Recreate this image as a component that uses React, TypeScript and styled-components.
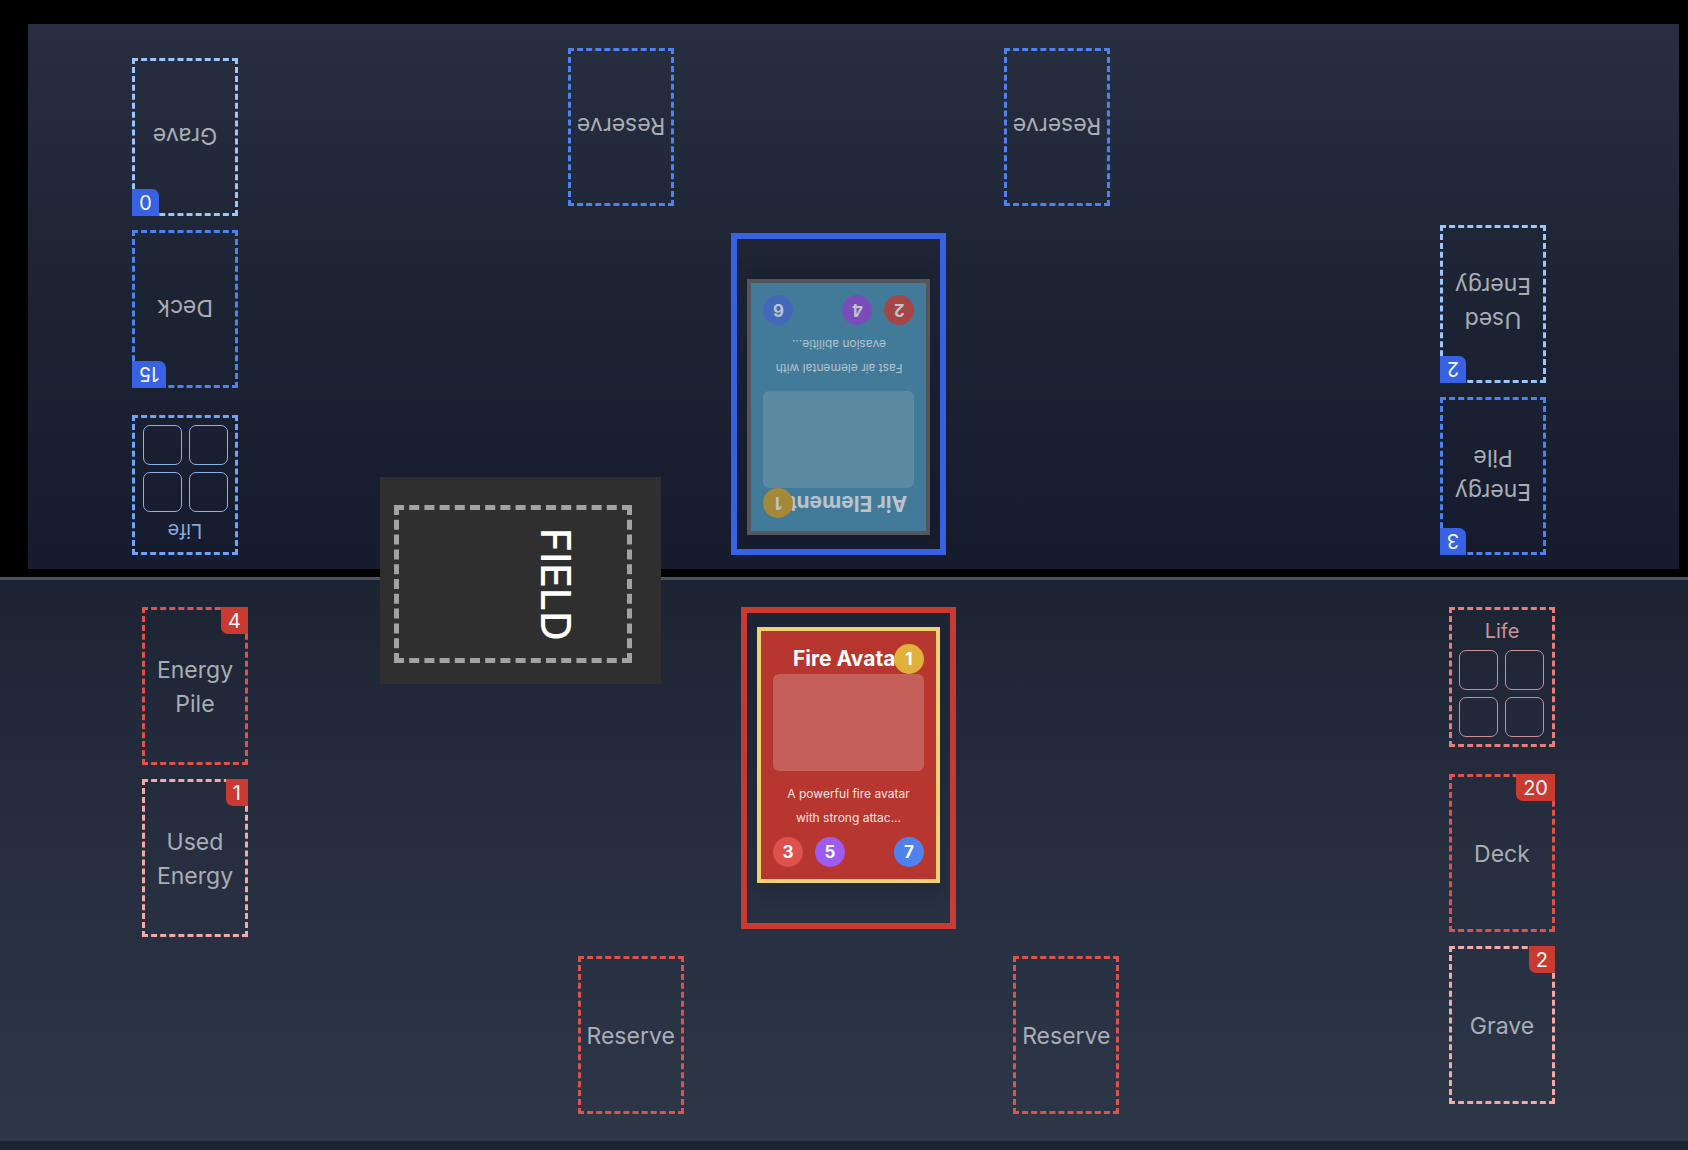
import React from "react";
import styled, { createGlobalStyle } from "styled-components";

const GlobalStyle = createGlobalStyle`
  *, *::before, *::after { box-sizing: border-box; }
  body {
    margin: 0;
    background: #000;
    font-family: Inter, "Liberation Sans", sans-serif;
  }
  h2, p { margin: 0; }
`;

type Side = "opponent" | "player";
type Kind = "pile" | "spent" | "life";

const palette = {
  opponent: {
    accent: "#3662e3",
    pile: "#4f82f1",
    spent: "#9dc5fa",
    life: "#6ea4f6",
    lifeText: "#86a9d8",
    cell: "#8ab2e6",
  },
  player: {
    accent: "#c93a31",
    pile: "#de524c",
    spent: "#f2aaa8",
    life: "#e57d79",
    lifeText: "#cb9596",
    cell: "#c98f92",
  },
};

const Page = styled.main`
  position: relative;
  display: flex;
  flex-direction: column;
  min-height: 100vh;
`;

const Table = styled.div`
  position: relative;
  padding-top: 24px;
`;

const Half = styled.section<{ $side: Side }>`
  display: flex;
  align-items: flex-start;
  ${({ $side }) =>
    $side === "opponent"
      ? `
    transform: rotate(180deg);
    margin: 0 9px 8px 28px;
    padding: 14px 104px 24px 133px;
    background: linear-gradient(to bottom, #161b2d, #1c2434 50%, #262e40);
  `
      : `
    padding: 27px 133px 27px 142px;
    border-top: 3px solid #4a5162;
    background: linear-gradient(to bottom, #1c2434, #262e40 50%, #2d3748);
  `}
`;

const Column = styled.div<{ $gap: number }>`
  display: flex;
  flex: none;
  flex-direction: column;
  gap: ${({ $gap }) => $gap}px;
  width: 106px;
`;

const Center = styled.div`
  display: flex;
  flex: 1;
  flex-direction: column;
  align-items: center;
  gap: 27px;
`;

const ReserveRow = styled.div`
  display: flex;
  justify-content: space-evenly;
  width: 100%;
`;

const SlotBox = styled.div<{ $side: Side; $kind: Kind }>`
  position: relative;
  display: flex;
  align-items: center;
  justify-content: center;
  width: 106px;
  height: 158px;
  padding-top: 2px;
  border: 3px dashed ${({ $side, $kind }) => palette[$side][$kind]};
  color: #a9adb5;
  font-size: 23px;
  line-height: 34px;
  text-align: center;
`;

const Count = styled.span<{ $side: Side }>`
  position: absolute;
  top: -3px;
  right: -3px;
  padding: 2px 7px 0;
  border-bottom-left-radius: 7px;
  background: ${({ $side }) => palette[$side].accent};
  color: #f4f5f8;
  font-size: 20px;
  line-height: 25px;
`;

const LifeBox = styled.div<{ $side: Side }>`
  height: 140px;
  padding: 9px 7px 0;
  border: 3px dashed ${({ $side }) => palette[$side].life};
  color: ${({ $side }) => palette[$side].lifeText};
  font-size: 20px;
  line-height: 24px;
  text-align: center;
`;

const LifeGrid = styled.div`
  display: grid;
  grid-template-columns: 39px 39px;
  grid-auto-rows: 40px;
  gap: 7px;
  margin-top: 7px;
`;

const LifeCell = styled.span<{ $side: Side }>`
  border: 1px solid ${({ $side }) => palette[$side].cell};
  border-radius: 7px;
`;

const AvatarFrame = styled.div<{ $side: Side }>`
  width: 215px;
  height: 322px;
  padding: 14px 10px;
  border: 6px solid ${({ $side }) => palette[$side].accent};
`;

const cardTheme = {
  player: {
    edge: "#efd274",
    fill: "#b83630",
    art: "#c55f59",
    title: "#ffffff",
    text: "#f6e4e3",
    cost: "#e0b13c",
    attack: "#dd524c",
    health: "#9d5bef",
    speed: "#4f82ee",
  },
  opponent: {
    edge: "#54565b",
    fill: "#427b9a",
    art: "#5b8aa1",
    title: "#bcc3cb",
    text: "#b4c2cc",
    cost: "#a58938",
    attack: "#a54646",
    health: "#7b4bba",
    speed: "#4368b9",
  },
};

const CardBox = styled.article<{ $side: Side }>`
  display: flex;
  flex-direction: column;
  height: 256px;
  padding: 13px 12px 12px;
  border: 4px solid ${({ $side }) => cardTheme[$side].edge};
  background: ${({ $side }) => cardTheme[$side].fill};
  box-shadow: 0 8px 16px rgba(0, 0, 0, 0.15);
`;

const CardHead = styled.header<{ $side: Side }>`
  position: relative;
  color: ${({ $side }) => cardTheme[$side].title};
  text-align: center;
`;

const CardTitle = styled.h2`
  overflow: hidden;
  font-size: 21px;
  font-weight: 700;
  line-height: 30px;
  white-space: nowrap;
`;

const Disc = styled.span<{ $color: string }>`
  display: inline-block;
  width: 30px;
  border-radius: 50%;
  background: ${({ $color }) => $color};
  font-size: 17px;
  font-weight: 700;
  line-height: 30px;
  text-align: center;
`;

const CostDisc = styled(Disc)`
  position: absolute;
  top: 0;
  right: 0;
`;

const Art = styled.div<{ $side: Side }>`
  height: 97px;
  border-radius: 6px;
  background: ${({ $side }) => cardTheme[$side].art};
`;

const Description = styled.p<{ $side: Side }>`
  margin-top: 11px;
  color: ${({ $side }) => cardTheme[$side].text};
  font-size: 12px;
  line-height: 24px;
  text-align: center;
`;

const Stats = styled.footer<{ $side: Side }>`
  display: flex;
  gap: 12px;
  margin-top: auto;
  color: ${({ $side }) => cardTheme[$side].title};

  > :last-child { margin-left: auto; }
`;

const Field = styled.section`
  position: absolute;
  top: 477px;
  left: 380px;
  padding: 28px 29px 21px 14px;
  background: #2f2f2f;
`;

const FieldZone = styled.div`
  display: flex;
  align-items: center;
  justify-content: flex-end;
  width: 238px;
  height: 158px;
  padding-right: 41px;
  border: 5px dashed #a2a2a2;
`;

const FieldLabel = styled.h2`
  color: #fff;
  font-size: 41px;
  font-weight: 500;
  line-height: 60px;
  writing-mode: vertical-rl;
`;

const Footer = styled.div`
  flex: 1;
  background: #1d2431;
`;

interface SlotProps {
  side: Side;
  kind?: Kind;
  lines: string[];
  count?: number;
}

function Slot({ side, kind = "pile", lines, count }: SlotProps) {
  return (
    <SlotBox $side={side} $kind={kind}>
      <div>
        {lines.map((line) => (
          <div key={line}>{line}</div>
        ))}
      </div>
      {count !== undefined && <Count $side={side}>{count}</Count>}
    </SlotBox>
  );
}

function Life({ side }: { side: Side }) {
  return (
    <LifeBox $side={side}>
      <div>Life</div>
      <LifeGrid>
        {[1, 2, 3, 4].map((n) => (
          <LifeCell key={n} $side={side} />
        ))}
      </LifeGrid>
    </LifeBox>
  );
}

interface Avatar {
  name: string;
  cost: number;
  text: string[];
  attack: number;
  health: number;
  speed: number;
}

function AvatarCard({ side, avatar }: { side: Side; avatar: Avatar }) {
  const theme = cardTheme[side];
  return (
    <CardBox $side={side}>
      <CardHead $side={side}>
        <CardTitle>{avatar.name}</CardTitle>
        <CostDisc $color={theme.cost}>{avatar.cost}</CostDisc>
      </CardHead>
      <Art $side={side} />
      <Description $side={side}>
        {avatar.text[0]}
        <br />
        {avatar.text[1]}
      </Description>
      <Stats $side={side}>
        <Disc $color={theme.attack}>{avatar.attack}</Disc>
        <Disc $color={theme.health}>{avatar.health}</Disc>
        <Disc $color={theme.speed}>{avatar.speed}</Disc>
      </Stats>
    </CardBox>
  );
}

interface BoardProps {
  side: Side;
  energy: number;
  used: number;
  deck: number;
  grave: number;
  avatar: Avatar;
}

function Board({ side, energy, used, deck, grave, avatar }: BoardProps) {
  return (
    <Half $side={side}>
      <Column $gap={14}>
        <Slot side={side} lines={["Energy", "Pile"]} count={energy} />
        <Slot side={side} kind="spent" lines={["Used", "Energy"]} count={used} />
      </Column>
      <Center>
        <AvatarFrame $side={side}>
          <AvatarCard side={side} avatar={avatar} />
        </AvatarFrame>
        <ReserveRow>
          <Slot side={side} lines={["Reserve"]} />
          <Slot side={side} lines={["Reserve"]} />
        </ReserveRow>
      </Center>
      <Column $gap={27}>
        <Life side={side} />
        <Column $gap={14}>
          <Slot side={side} lines={["Deck"]} count={deck} />
          <Slot side={side} kind="spent" lines={["Grave"]} count={grave} />
        </Column>
      </Column>
    </Half>
  );
}

const airElemental: Avatar = {
  name: "Air Elemental",
  cost: 1,
  text: ["Fast air elemental with", "evasion abilitie..."],
  attack: 2,
  health: 4,
  speed: 6,
};

const fireAvatar: Avatar = {
  name: "Fire Avatar",
  cost: 1,
  text: ["A powerful fire avatar", "with strong attac..."],
  attack: 3,
  health: 5,
  speed: 7,
};

export default function App() {
  return (
    <Page>
      <GlobalStyle />
      <Table>
        <Board side="opponent" energy={3} used={2} deck={15} grave={0} avatar={airElemental} />
        <Board side="player" energy={4} used={1} deck={20} grave={2} avatar={fireAvatar} />
        <Field>
          <FieldZone>
            <FieldLabel>FIELD</FieldLabel>
          </FieldZone>
        </Field>
      </Table>
      <Footer />
    </Page>
  );
}
